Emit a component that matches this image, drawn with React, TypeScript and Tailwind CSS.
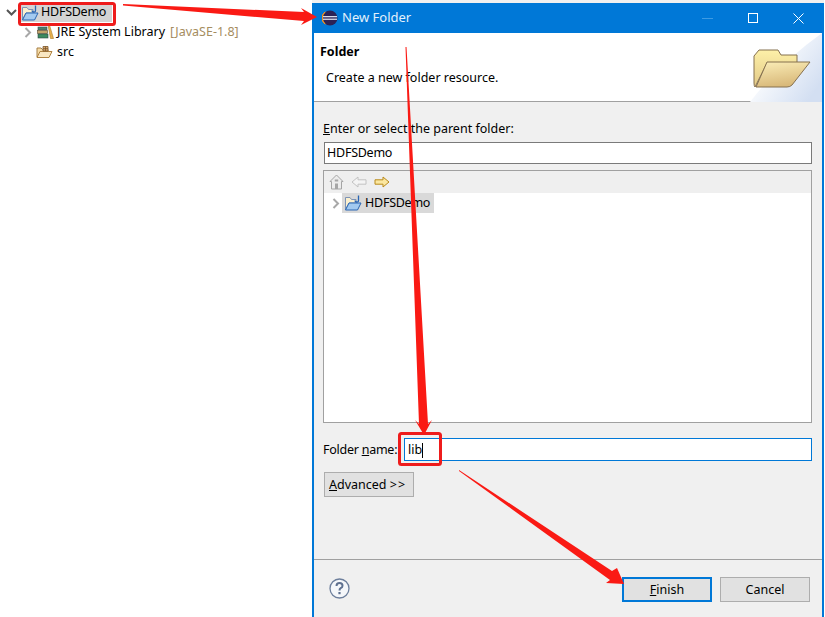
const font = "[font-family:'Noto_Sans','Open_Sans',sans-serif]";

function Chevron({ open }: { open?: boolean }) {
  return (
    <svg width="11" height="11" viewBox="0 0 11 11" className="shrink-0">
      {open ? (
        <path d="M1 3 L5.5 7.5 L10 3" fill="none" stroke="#555" strokeWidth="2" />
      ) : (
        <path d="M3.5 1 L8 5.5 L3.5 10" fill="none" stroke="#a8a8a8" strokeWidth="2" />
      )}
    </svg>
  );
}

function ProjectFolder() {
  return (
    <svg width="18" height="16" viewBox="0 0 18 16" className="shrink-0">
      <path d="M1.5 14.5 V2.5 H6 L7.5 4.5 H12 V8 H5 L1.5 14.5 Z" fill="#fbf0cf" stroke="#7d93b5" />
      <path d="M1.5 15 L5 8 H17 L13.5 15 Z" fill="#a3caf0" stroke="#2a66b3" />
      <path d="M14.5 0.5 V5.5 Q14.5 7.3 12.5 7 Q11 6.8 11 5.5" fill="none" stroke="#2a66b3" strokeWidth="1.3" />
    </svg>
  );
}

function JreIcon() {
  return (
    <svg width="17" height="16" viewBox="0 0 17 16" className="shrink-0">
      <rect x="1" y="3" width="9" height="3" fill="#4f7f6d" stroke="#3b4a55" strokeWidth="0.6" />
      <rect x="0.5" y="6.5" width="10" height="3" fill="#c2a36a" stroke="#5b4a30" strokeWidth="0.6" />
      <rect x="1" y="10" width="10" height="4" fill="#3c8a60" stroke="#2c4a45" strokeWidth="0.6" />
      <path d="M11 1 L12.5 1 L16.5 14.5 L13.5 14.5 Z" fill="#e8b04c" stroke="#a97a2a" strokeWidth="0.6" />
    </svg>
  );
}

function SrcIcon() {
  return (
    <svg width="17" height="14" viewBox="0 0 17 14" className="shrink-0">
      <path d="M1 12 V3 H5 L6.5 4.5 H12 V12 Z" fill="#f6dca6" stroke="#a67f45" />
      <path d="M1 12.5 L4 6.5 H16 L13 12.5 Z" fill="#f9e7c2" stroke="#b08442" />
      <path d="M7 1.5 H12 V6 H7 Z M9.5 1.5 V6 M7 3.7 H12" fill="#d9ab72" stroke="#7a5428" strokeWidth="0.8" />
    </svg>
  );
}

function EclipseLogo() {
  return (
    <svg width="16" height="16" viewBox="0 0 16 16" className="shrink-0">
      <circle cx="8" cy="8" r="7.5" fill="#2c2255" />
      <path d="M3.2 1.9 A7.5 7.5 0 0 0 3.2 14.1 A8 8 0 0 1 3.2 1.9 Z" fill="#f7941e" stroke="#f7941e" />
      <rect x="1" y="6" width="14" height="1.3" fill="#d8dcea" />
      <rect x="1" y="8.6" width="14" height="1.3" fill="#d8dcea" />
    </svg>
  );
}

function BannerArt() {
  return (
    <svg width="72" height="69" viewBox="0 0 72 69" className="absolute right-0 top-0">
      <defs>
        <linearGradient id="bg" x1="0.1" y1="0.1" x2="1" y2="0.7">
          <stop offset="0.2" stopColor="#ffffff" />
          <stop offset="1" stopColor="#d3dff2" />
        </linearGradient>
        <linearGradient id="front" x1="0" y1="0" x2="0.3" y2="1">
          <stop offset="0" stopColor="#fbeeb8" />
          <stop offset="1" stopColor="#d9b97a" />
        </linearGradient>
        <linearGradient id="back" x1="0" y1="0" x2="0" y2="1">
          <stop offset="0" stopColor="#fdf0a8" />
          <stop offset="1" stopColor="#e3c987" />
        </linearGradient>
      </defs>
      <path d="M0 69 Q30 30 72 0 V69 Z" fill="url(#bg)" />
      <path d="M4 23 L9 17 H28 L31 22 H47 V30 H17 L5 54 Q4 53 4 50 Z" fill="url(#back)" stroke="#85704f" strokeWidth="1" />
      <path d="M17 29 H60 L42 52 Q40 54 37 54 H6 Z" fill="url(#front)" stroke="#85704f" strokeWidth="1" />
    </svg>
  );
}

function TreeToolbar() {
  return (
    <div className="h-[22px] bg-[#efefef] flex items-center gap-[7px] pl-[5px]">
      <svg width="15" height="16" viewBox="0 0 15 16">
        <path d="M7.5 1 L14 7.5 H12.5 V15 H2.5 V7.5 H1 Z" fill="#ececec" stroke="#a5a5a5" />
        <rect x="6" y="9.5" width="3" height="5.5" fill="#a5a5a5" />
        <rect x="5.8" y="5.5" width="3.4" height="2" fill="#a5a5a5" />
      </svg>
      <svg width="16" height="12" viewBox="0 0 16 12">
        <path d="M1 6 L7 1 V3.8 H15 V8.2 H7 V11 Z" fill="#f4f4f4" stroke="#c2c2c2" />
      </svg>
      <svg width="16" height="12" viewBox="0 0 16 12">
        <path d="M15 6 L9 1 V3.8 H1 V8.2 H9 V11 Z" fill="#fbe7a0" stroke="#b98a1c" />
      </svg>
    </div>
  );
}

function Overlay() {
  const red = "#fa1a14";
  return (
    <svg width="825" height="617" viewBox="0 0 825 617" className="absolute left-0 top-0 pointer-events-none">
      <rect x="19.5" y="3.5" width="95" height="21" rx="2" fill="none" stroke="#ee1c1c" strokeWidth="3" />
      <rect x="399.5" y="433.5" width="41" height="31" rx="2" fill="none" stroke="#ee1c1c" strokeWidth="3" />
      <polygon fill={red} points="123,4 304,12 301,8 317,17 301,25 304,21 123,5.5" />
      <polygon fill={red} points="405.5,47 406.5,47 428,424 432,420 424,435 415,420 419,424" />
      <polygon fill={red} points="459,470 612,571 617,568 624,584 606,583 610,580 459,471" />
    </svg>
  );
}

export default function App() {
  return (
    <div className={`relative w-[825px] h-[617px] overflow-hidden bg-white flex text-black text-[12.5px] ${font}`}>
      <div className="w-[312px] shrink-0 pt-[3px]">
        <div className="flex items-center h-[19px] pl-[6px]">
          <Chevron open />
          <div className="ml-[2px] flex items-center h-[19px] w-[93px] bg-[#d4d4d4] pl-[2px] gap-[2px]">
            <ProjectFolder />
            <span className="tracking-[-0.25px]">HDFSDemo</span>
          </div>
        </div>
        <div className="flex items-center h-[20px] pl-[22px]">
          <Chevron />
          <span className="ml-[4px]"><JreIcon /></span>
          <span className="ml-[3px]">JRE System Library</span>
          <span className="ml-[5px] text-[#a58d5f]">[JavaSE-1.8]</span>
        </div>
        <div className="flex items-center h-[20px] pl-[36px]">
          <SrcIcon />
          <span className="ml-[4px]">src</span>
        </div>
      </div>

      <div className="w-[512px] shrink-0 flex flex-col">
        <div className="h-[3px] bg-[#f0f0f0]" />
        <div className="flex-1 flex flex-col border-x-2 border-[#0078d7] bg-[#f0f0f0]">
          <div className="h-[30px] bg-[#0078d7] flex items-center text-[#e3f1fc] text-[13px] pl-[8px]">
            <EclipseLogo />
            <span className="ml-[4px]">New Folder</span>
            <div className="ml-auto flex items-center">
              <div className="w-[11px] h-px bg-[#3d9be4]" />
              <div className="ml-[35px] w-[10px] h-[10px] border border-white" />
              <svg width="11" height="11" viewBox="0 0 11 11" className="ml-[35px] mr-[18px]">
                <path d="M0.5 0.5 L10.5 10.5 M10.5 0.5 L0.5 10.5" stroke="#fff" strokeWidth="1" fill="none" />
              </svg>
            </div>
          </div>

          <div className="relative h-[69px] bg-white border-b border-[#a0a0a0] pl-[6px] pt-[10px]">
            <div className="font-bold leading-[18px]">Folder</div>
            <div className="ml-[6px] mt-[8px] leading-[18px]">Create a new folder resource.</div>
            <BannerArt />
          </div>

          <div className="flex flex-col pl-[9px] pr-[10px] pt-[18px]">
            <div className="h-[18px] leading-[18px]"><u>E</u>nter or select the parent folder:</div>
            <div className="mt-[4px] h-[22px] bg-white border border-[#7a7a7a] flex items-center pl-[2px] ml-px tracking-[-0.25px]">HDFSDemo</div>
            <div className="mt-[6px] h-[253px] bg-white border border-[#a0a0a0]">
              <TreeToolbar />
              <div className="flex items-center h-[20px] pl-[6px]">
                <Chevron />
                <div className="ml-[1px] flex items-center h-[20px] w-[92px] bg-[#d9d9d9] pl-[2px] gap-[3px]">
                  <ProjectFolder />
                  <span className="tracking-[-0.25px]">HDFSDemo</span>
                </div>
              </div>
            </div>
            <div className="mt-[15px] flex items-center h-[23px]">
              <span className="w-[81px] whitespace-nowrap tracking-[-0.25px] pt-px">Folder <u>n</u>ame:</span>
              <div className="flex-1 h-[23px] bg-white border border-[#0078d7] flex items-center pl-[3px] pt-px">
                lib<span className="w-px h-[15px] bg-black" />
              </div>
            </div>
            <button className="mt-[11px] ml-px w-[90px] h-[25px] bg-[#e1e1e1] border border-[#adadad] text-left pl-[4px] pt-px whitespace-nowrap">
              <u>A</u>dvanced <span className="tracking-[1px]">&gt;&gt;</span>
            </button>
          </div>

          <div className="mt-[62px] h-px bg-[#a0a0a0]" />
          <div className="flex-1 flex items-start pl-[15px] pr-[12px] pt-[17px]">
            <svg width="21" height="21" viewBox="0 0 21 21" className="mt-px">
              <circle cx="10.5" cy="10.5" r="9.5" fill="#f5f7fa" stroke="#6d7f9c" strokeWidth="1.3" />
              <path d="M7.5 8 Q7.5 5 10.5 5 Q13.5 5 13.5 7.7 Q13.5 9.3 11.7 10.2 Q10.5 10.9 10.5 12.5" fill="none" stroke="#5f7190" strokeWidth="2" />
              <rect x="9.4" y="14" width="2.2" height="2.2" fill="#5f7190" />
            </svg>
            <button className="ml-auto w-[90px] h-[25px] bg-[#e1e1e1] border-2 border-[#0078d7] pt-px"><u>F</u>inish</button>
            <button className="ml-[8px] w-[90px] h-[25px] bg-[#e1e1e1] border border-[#adadad] pt-px">Cancel</button>
          </div>
        </div>
      </div>

      <Overlay />
    </div>
  );
}
